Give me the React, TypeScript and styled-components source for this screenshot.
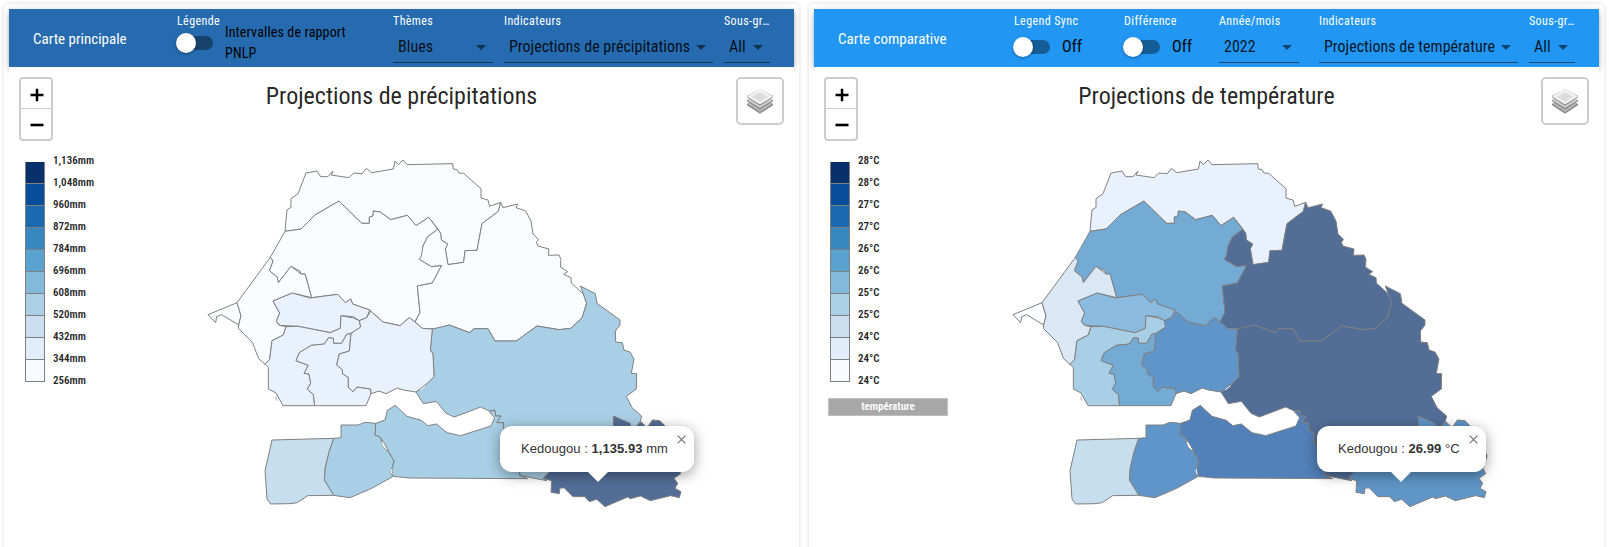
import React from "react";
import styled, { createGlobalStyle } from "styled-components";

const GlobalStyle = createGlobalStyle`
  * { box-sizing: border-box; }
  body {
    margin: 0;
    background: #fff;
    color: rgba(0, 0, 0, 0.87);
    font-family: "Roboto Condensed", Roboto, sans-serif;
    font-stretch: 75%;
    overflow: hidden;
  }
`;

const Page = styled.main`
  display: grid;
  grid-template-columns: 795px 795px;
  gap: 10px;
  height: 547px;
  padding: 4px 4px 0;
  overflow: hidden;
`;

const Card = styled.section`
  height: 560px;
  padding: 5px;
  background: #fff;
  border-radius: 4px;
  box-shadow: 0 0 4px rgba(0, 0, 0, 0.14);
`;

const Header = styled.header<{ $color: string; $columns: string }>`
  display: grid;
  grid-template-columns: ${(p) => p.$columns};
  height: 58px;
  background: ${(p) => p.$color};
  box-shadow: 0 2px 4px -1px rgba(0, 0, 0, 0.2), 0 4px 5px rgba(0, 0, 0, 0.14), 0 1px 10px rgba(0, 0, 0, 0.12);
`;

const CardTitle = styled.div`
  padding: 20px 0 0 24px;
  color: #fff;
  font-size: 15px;
  line-height: 20px;
  white-space: nowrap;
`;

const Field = styled.div<{ $width?: number }>`
  width: ${(p) => (p.$width ? `${p.$width}px` : "auto")};
  padding-top: 4px;
  white-space: nowrap;
`;

const FieldLabel = styled.div`
  height: 16px;
  color: #fff;
  font-size: 12px;
  line-height: 16px;
  letter-spacing: 0.4px;
`;

const SelectBox = styled.div`
  display: flex;
  align-items: center;
  justify-content: space-between;
  height: 30px;
  margin-top: 4px;
  padding: 0 7px 0 5px;
  border-bottom: 1px solid rgba(0, 0, 0, 0.5);
  font-size: 16px;
`;

const SelectValue = styled.span`
  padding-bottom: 2px;
`;

const Arrow = styled.i`
  border: 5px solid transparent;
  border-top-color: rgba(0, 0, 0, 0.54);
  border-bottom: 0;
`;

const SwitchRow = styled.div<{ $tall?: boolean }>`
  display: flex;
  align-items: center;
  gap: 12px;
  height: 40px;
  margin-top: ${(p) => (p.$tall ? -6 : -2)}px;
  margin-left: -1px;
`;

const Track = styled.div`
  width: 37px;
  height: 14px;
  border-radius: 7px;
  background: rgba(0, 0, 0, 0.38);
`;

const Knob = styled.div`
  width: 20px;
  height: 20px;
  margin-top: -3px;
  border-radius: 50%;
  background: #fff;
  box-shadow: 0 1px 3px rgba(0, 0, 0, 0.35);
`;

const SwitchText = styled.div<{ $small?: boolean }>`
  padding-bottom: ${(p) => (p.$small ? 0 : 2)}px;
  color: #000;
  font-size: ${(p) => (p.$small ? 14 : 16)}px;
  line-height: 21px;
  letter-spacing: 0.15px;
`;

const Body = styled.div`
  position: relative;
  height: 480px;
  background: #fff;
`;

const Heading = styled.h2`
  margin: 0;
  padding-top: 12px;
  font-size: 24px;
  font-weight: 400;
  line-height: 34px;
  text-align: center;
`;

const ZoomControl = styled.div`
  position: absolute;
  left: 10px;
  top: 10px;
  width: 34px;
  height: 64px;
  border: 2px solid rgba(0, 0, 0, 0.2);
  border-radius: 4px;
`;

const ZoomButton = styled.div`
  display: grid;
  place-items: center;
  height: 30px;
  padding: 2px 0 0 1px;
  & + & {
    height: 31px;
    margin-top: -1px;
    border-top: 1px solid #ccc;
  }
`;

const LayersButton = styled.div`
  position: absolute;
  right: 10px;
  top: 10px;
  display: grid;
  place-items: center;
  width: 48px;
  height: 48px;
  border: 2px solid rgba(0, 0, 0, 0.2);
  border-radius: 5px;
`;

const Legend = styled.div`
  position: absolute;
  left: 16px;
  top: 95px;
  display: flex;
  align-items: flex-start;
  gap: 8px;
`;

const Swatches = styled.div`
  width: 20px;
  border: solid #808080;
  border-width: 0 1px;
`;

const Swatch = styled.div<{ $color: string }>`
  height: 22px;
  background: ${(p) => p.$color};
  border-bottom: 1px solid #808080;
`;

const Ticks = styled.div`
  margin-top: -12px;
  font-size: 11px;
  font-weight: 600;
  line-height: 22px;
`;

const Tag = styled.div`
  position: absolute;
  left: 14px;
  top: 331px;
  width: 120px;
  height: 18px;
  border: 1px solid #bfbfbf;
  background: #a8a8a8;
  color: #fff;
  font-size: 11px;
  font-weight: 600;
  line-height: 16px;
  text-align: center;
`;

const MapCanvas = styled.svg`
  position: absolute;
  left: 191px;
  top: 83px;
  width: 500px;
  height: 370px;
`;

const Popup = styled.div<{ $left: number; $width: number; $tip: number }>`
  position: absolute;
  left: ${(p) => p.$left}px;
  top: 359px;
  width: ${(p) => p.$width}px;
  height: 46px;
  padding-left: 21px;
  border-radius: 12px;
  background: #fff;
  color: #333;
  font: 13px/45px "Liberation Sans", Arial, sans-serif;
  font-stretch: 100%;
  letter-spacing: 0.04px;
  white-space: nowrap;
  box-shadow: 0 3px 14px rgba(0, 0, 0, 0.4);
  &::after {
    content: "";
    position: absolute;
    left: ${(p) => p.$tip}px;
    top: 46px;
    border: 10px solid transparent;
    border-top-color: #fff;
    border-bottom: 0;
  }
`;

const Close = styled.svg`
  position: absolute;
  right: 8px;
  top: 9px;
`;

const REGIONS: Record<string, string> = {
  saintLouis:
    "255,244 261,180 273,172 273,146 294,131 318,69 351,63 362,80 384,80 399,63 393,75 447,83 461,69 487,71 499,55 515,68 580,57 585,33 595,44 609,30 621,44 758,41 760,57 771,59 777,69 791,70 843,116 843,144 864,150 869,169 902,157 895,184 846,221 831,301 795,302 791,337 744,344 736,297 743,282 724,270 722,250 713,236 686,202 648,227 622,196 572,209 541,186 520,183 519,198 508,201 508,220 485,220 417,153 345,195 303,237",
  louga:
    "255,244 303,237 345,195 417,153 485,220 508,220 508,201 519,198 520,183 541,186 572,209 622,196 648,227 686,202 713,238 683,260 669,288 667,318 658,328 695,350 725,346 697,399 652,408 660,487 645,516 628,503 600,527 549,516 509,480 458,462 452,447 436,458 413,433 335,443 315,372 303,372 300,363 273,349 235,398 231,381 208,362 219,333 211,322",
  matam:
    "713,238 722,250 724,270 743,282 736,297 744,344 791,337 795,302 831,301 846,221 895,184 902,157 909,173 953,162 948,173 977,183 993,213 999,252 1016,269 1009,276 1014,288 1047,297 1045,316 1077,315 1083,328 1081,351 1103,365 1091,373 1113,383 1114,399 1150,432 1160,460 1146,504 1112,535 1077,539 1011,528 949,573 885,573 864,536 822,536 809,548 748,525 705,537 667,535 645,516 660,487 652,408 697,399 725,346 695,350 658,328 664,318 669,288 683,260",
  tambacounda:
    "1141,408 1186,431 1191,460 1260,510 1260,525 1246,543 1247,576 1267,578 1272,600 1290,606 1302,627 1294,670 1310,671 1309,717 1279,739 1296,773 1325,798 1321,814 1310,828 1240,860 1050,940 1045,970 1030,984 1040,992 959,976 959,960 937,885 926,880 927,850 911,840 910,818 890,818 903,798 887,798 884,780 868,783 842,771 763,801 738,790 709,754 670,761 648,726 666,715 702,680 699,610 691,600 697,537 748,525 809,548 822,536 864,536 885,573 949,573 1011,528 1077,539 1112,535 1146,504 1160,460 1150,432",
  kedougou:
    "1240,798 1291,820 1292,840 1310,828 1323,815 1338,830 1345,828 1357,810 1380,812 1395,828 1420,850 1446,918 1440,940 1434,955 1442,971 1422,985 1433,1000 1425,1015 1443,1025 1438,1043 1412,1037 1351,1052 1321,1038 1291,1046 1283,1041 1215,1070 1190,1048 1168,1055 1154,1040 1119,1040 1093,1014 1080,1014 1078,1031 1053,1027 1055,992 1030,985 1045,970 1050,940 1240,860",
  kolda:
    "527,820 555,810 562,781 586,766 621,799 664,811 683,827 709,822 741,848 782,857 873,828 884,803 868,785 884,780 887,798 903,798 890,818 910,818 911,840 927,850 926,880 937,885 959,960 959,976 983,986 630,984 580,979 575,960 582,933 567,908 556,885 541,862 525,855",
  sedhiou:
    "423,825 474,825 495,817 527,820 525,855 541,862 550,890 567,908 582,933 572,965 578,980 515,1015 450,1043 401,1036 373,990 375,955 387,905 401,865 423,863",
  ziguinchor:
    "216,870 401,865 387,905 375,955 373,990 401,1036 323,1037 292,1058 270,1061 212,1062 201,1047 195,962",
  dakar: "24,494 111,458 123,497 116,525 65,494 50,500 47,518",
  thies:
    "211,322 219,333 208,362 231,381 235,398 273,349 303,372 315,372 335,443 277,429 219,453 239,489 229,514 238,526 258,530 250,555 216,572 209,628 195,643 176,626 157,577 115,535 116,525 123,497 111,458",
  diourbel:
    "219,453 277,429 330,444 413,433 436,458 452,447 458,462 509,480 500,503 478,512 460,500 423,497 421,535 391,548 295,529 240,526 229,514 239,489",
  fatick:
    "258,530 295,529 391,548 421,535 423,497 460,504 478,512 482,531 453,550 440,553 425,580 401,580 400,565 386,563 373,582 334,586 298,608 288,632 325,646 312,670 327,672 332,700 322,718 340,733 344,767 249,767 228,729 205,717 205,653 195,643 209,628 216,572 250,555",
  kaolack:
    "344,767 340,733 322,718 332,700 327,672 312,670 325,646 288,632 298,608 334,586 373,582 386,563 400,565 401,580 425,580 440,553 453,550 448,603 418,612 410,645 427,659 428,672 445,682 445,712 459,725 471,711 512,717 513,731 498,767",
  kaffrine:
    "453,550 482,531 478,512 500,503 512,483 549,516 600,527 628,503 645,516 667,535 697,537 691,600 699,612 702,680 682,700 648,726 610,720 592,714 558,731 537,723 513,731 512,717 471,711 459,725 445,712 445,682 428,672 427,659 410,645 418,612 448,603",
};

const RAINFALL: Record<string, string> = {
  saintLouis: "#f9fdff",
  louga: "#f9fdff",
  matam: "#f9fdff",
  tambacounda: "#a9cfe6",
  kedougou: "#526e97",
  kolda: "#a9cfe6",
  sedhiou: "#a9cfe6",
  ziguinchor: "#c6deee",
  dakar: "#f9fdff",
  thies: "#f9fdff",
  diourbel: "#e9f1fc",
  fatick: "#e9f1fc",
  kaolack: "#e9f1fc",
  kaffrine: "#e9f1fc",
};

const TEMPERATURE: Record<string, string> = {
  saintLouis: "#e9f1fc",
  louga: "#74abd4",
  matam: "#526e97",
  tambacounda: "#526e97",
  kedougou: "#5f95c7",
  kolda: "#5181b8",
  sedhiou: "#5f95c9",
  ziguinchor: "#c6deee",
  dakar: "#f9fdff",
  thies: "#dae7f5",
  diourbel: "#8bbcdf",
  fatick: "#a9cfe6",
  kaolack: "#74abd4",
  kaffrine: "#5f95c9",
};

const BLUES = ["#08306b", "#084d99", "#1b69b0", "#3787c0", "#5aa2cf", "#83badb", "#abcfe5", "#ccdff0", "#e1edf8", "#f7fbff"];

function Select({ label, value, width }: { label: string; value: string; width: number }) {
  return (
    <Field $width={width}>
      <FieldLabel>{label}</FieldLabel>
      <SelectBox>
        <SelectValue>{value}</SelectValue>
        <Arrow />
      </SelectBox>
    </Field>
  );
}

function Switch({ label, tall, children }: { label: string; tall?: boolean; children: React.ReactNode }) {
  return (
    <Field>
      <FieldLabel>{label}</FieldLabel>
      <SwitchRow $tall={tall}>
        <Track>
          <Knob />
        </Track>
        <SwitchText $small={tall}>{children}</SwitchText>
      </SwitchRow>
    </Field>
  );
}

function LayersIcon() {
  return (
    <svg width="26" height="26" viewBox="0 0 26 26">
      <path d="M0 17.2 13 25.7 26 17.2V16L13 8 0 16Z" fill="#8a8a8a" />
      <path d="M1 16 13 24 25 16 13 8Z" fill="#b9b9b9" />
      <path d="M0 13.2 13 21.7 26 13.2V12L13 4 0 12Z" fill="#8a8a8a" />
      <path d="M0 12 13 20 26 12 13 4Z" fill="#cfcfcf" />
      <path d="M0 9.2 13 17.7 26 9.2V8L13 1 0 8Z" fill="#858585" />
      <path d="M0 8.4 13 0.5 26 8.4 13 16.5Z" fill="#f1f1f1" />
      <path d="M5 8.7 13 4.5 21 8.7 13 14Z" fill="#dcdcdc" />
    </svg>
  );
}

interface MapPanelProps {
  heading: string;
  colors: Record<string, string>;
  ticks: string[];
  tag?: string;
  popup: { left: number; width: number; tip: number; value: string; unit: string };
}

function MapPanel({ heading, colors, ticks, tag, popup }: MapPanelProps) {
  return (
    <Body>
      <Heading>{heading}</Heading>
      <MapCanvas viewBox="0 0 1500 1110" stroke="#808080" strokeWidth="3" strokeLinejoin="round">
        {Object.entries(REGIONS).map(([name, points]) => (
          <polygon key={name} points={points} fill={colors[name]} />
        ))}
        <path d="M228 739v8l3 5" fill="none" strokeWidth="2" />
        <path d="M547 876l4 14 10 7M575 957l-2 8 4 7M660 720l17-13" fill="none" stroke="#fff" strokeWidth="3" />
      </MapCanvas>
      <ZoomControl>
        <ZoomButton>
          <svg width="14" height="14" viewBox="0 0 14 14">
            <path d="M.5 7h13M7 .8v12.4" stroke="#000" strokeWidth="2.5" />
          </svg>
        </ZoomButton>
        <ZoomButton>
          <svg width="14" height="14" viewBox="0 0 14 14">
            <path d="M.5 7h13" stroke="#000" strokeWidth="2.6" />
          </svg>
        </ZoomButton>
      </ZoomControl>
      <LayersButton>
        <LayersIcon />
      </LayersButton>
      <Legend>
        <Swatches>
          {BLUES.map((c) => (
            <Swatch key={c} $color={c} />
          ))}
        </Swatches>
        <Ticks>
          {ticks.map((t, i) => (
            <div key={i}>{t}</div>
          ))}
        </Ticks>
      </Legend>
      {tag && <Tag>{tag}</Tag>}
      <Popup $left={popup.left} $width={popup.width} $tip={popup.tip}>
        Kedougou : <b>{popup.value}</b> {popup.unit}
        <Close width="9" height="9" viewBox="0 0 9 9">
          <path d="M.6.6l7.8 7.8M8.4.6L.6 8.4" stroke="#757575" strokeWidth="1.2" />
        </Close>
      </Popup>
    </Body>
  );
}

export default function App() {
  return (
    <>
      <GlobalStyle />
      <Page>
        <Card>
          <Header $color="#266baf" $columns="168px 216px 111px 220px 1fr">
            <CardTitle>Carte principale</CardTitle>
            <Switch label="Légende" tall>
              Intervalles de rapport
              <br />
              PNLP
            </Switch>
            <Select label="Thèmes" value="Blues" width={100} />
            <Select label="Indicateurs" value="Projections de précipitations" width={209} />
            <Select label="Sous-gr…" value="All" width={46} />
          </Header>
          <MapPanel
            heading="Projections de précipitations"
            colors={RAINFALL}
            ticks={["1,136mm", "1,048mm", "960mm", "872mm", "784mm", "696mm", "608mm", "520mm", "432mm", "344mm", "256mm"]}
            popup={{ left: 491, width: 194, tip: 88, value: "1,135.93", unit: "mm" }}
          />
        </Card>
        <Card>
          <Header $color="#2196f3" $columns="200px 110px 95px 100px 210px 1fr">
            <CardTitle>Carte comparative</CardTitle>
            <Switch label="Legend Sync">Off</Switch>
            <Switch label="Différence">Off</Switch>
            <Select label="Année/mois" value="2022" width={80} />
            <Select label="Indicateurs" value="Projections de température" width={199} />
            <Select label="Sous-gr…" value="All" width={46} />
          </Header>
          <MapPanel
            heading="Projections de température"
            colors={TEMPERATURE}
            ticks={["28°C", "28°C", "27°C", "27°C", "26°C", "26°C", "25°C", "25°C", "24°C", "24°C", "24°C"]}
            tag="température"
            popup={{ left: 503, width: 169, tip: 74, value: "26.99", unit: "°C" }}
          />
        </Card>
      </Page>
    </>
  );
}
